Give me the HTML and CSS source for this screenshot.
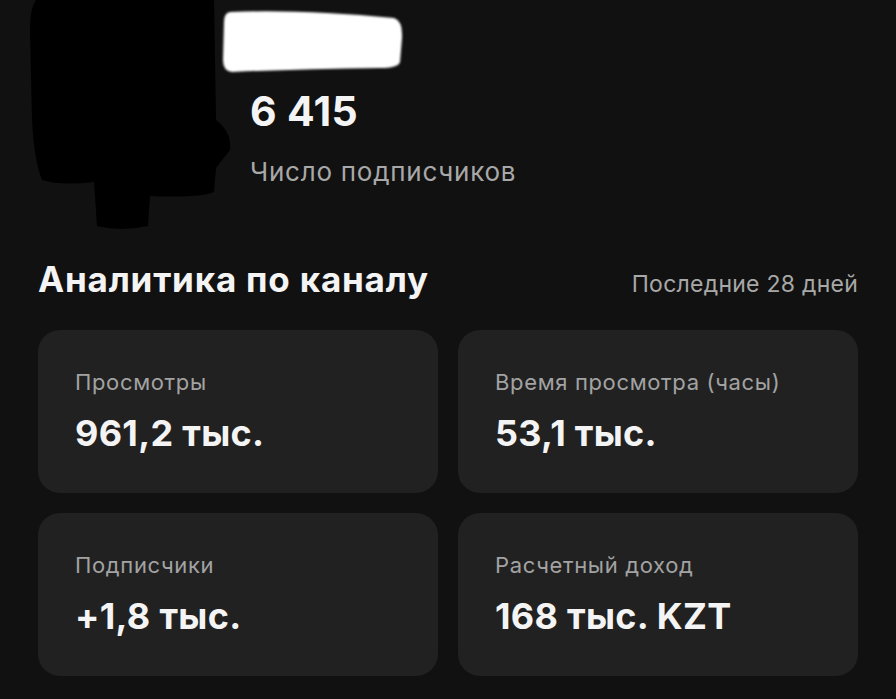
FILE: index.html
```html
<!DOCTYPE html>
<html lang="ru">
<head>
<meta charset="utf-8">
<title>Аналитика по каналу</title>
<link rel="stylesheet" href="styles.css">
</head>
<body>
<main class="screen">
  <header class="profile">
    <svg class="avatar" viewBox="28 0 194 230" width="194" height="230" aria-hidden="true">
      <path d="M36,0 L214,0 L216,120 Q232,132 230,150 L216,168 L214,192 Q200,198 150,196 L148,226 Q120,232 97,226 L94,182 Q60,186 42,180 Q34,160 32,120 L30,30 Q30,8 36,0 Z" fill="#000"/>
    </svg>
    <div class="profile-info">
      <svg class="name-mask" viewBox="222 8 182 66" width="182" height="66" aria-hidden="true">
        <defs>
          <filter id="soft" x="-10%" y="-20%" width="120%" height="140%">
            <feGaussianBlur stdDeviation="1.2"/>
          </filter>
        </defs>
        <path d="M230,12 Q300,9 394,18 Q403,21 402,38 L400,62 Q398,68 380,68 Q300,69 232,72 Q223,71 223,60 L224,22 Q224,13 230,12 Z" fill="#fff" filter="url(#soft)"/>
      </svg>
      <div class="subs-count">6 415</div>
      <div class="subs-label">Число подписчиков</div>
    </div>
  </header>

  <section class="analytics">
    <div class="analytics-head">
      <h1 class="analytics-title">Аналитика по каналу</h1>
      <span class="analytics-period">Последние 28 дней</span>
    </div>
    <div class="stats">
      <div class="stat-card">
        <div class="stat-label">Просмотры</div>
        <div class="stat-value">961,2 тыс.</div>
      </div>
      <div class="stat-card">
        <div class="stat-label">Время просмотра (часы)</div>
        <div class="stat-value">53,1 тыс.</div>
      </div>
      <div class="stat-card">
        <div class="stat-label">Подписчики</div>
        <div class="stat-value">+1,8 тыс.</div>
      </div>
      <div class="stat-card">
        <div class="stat-label">Расчетный доход</div>
        <div class="stat-value">168 тыс. KZT</div>
      </div>
    </div>
  </section>
</main>
</body>
</html>
```

FILE: styles.css
```css
* {
  box-sizing: border-box;
}

html, body {
  margin: 0;
  background: #111111;
}

body {
  width: 896px;
  height: 699px;
  overflow: hidden;
  font-family: Inter, "Liberation Sans", Arial, sans-serif;
  color: #f4f4f4;
}

.screen {
  display: flex;
  flex-direction: column;
}

/* profile header: avatar + channel name + subscriber count */
.profile {
  display: flex;
  height: 262px;
  padding-left: 28px;
}

.avatar {
  flex: none;
  overflow: visible;
}

.profile-info {
  display: flex;
  flex-direction: column;
  padding-top: 8px;
}

.name-mask {
  display: block;
  overflow: visible;
}

.subs-count {
  margin: 17px 0 0 28px;
  font-size: 41px;
  font-weight: 700;
  line-height: 1;
  letter-spacing: 0.3px;
}

.subs-label {
  margin: 27px 0 0 28px;
  font-size: 26px;
  line-height: 1;
  color: #a8a8a8;
  letter-spacing: 0.75px;
}

/* analytics block */
.analytics {
  padding: 0 38px;
}

.analytics-head {
  display: flex;
  justify-content: space-between;
  align-items: baseline;
}

.analytics-title {
  margin: 0;
  font-size: 35px;
  font-weight: 700;
  line-height: 1;
  letter-spacing: 0.8px;
}

.analytics-period {
  font-size: 23px;
  line-height: 1;
  color: #a8a8a8;
  letter-spacing: 0.25px;
}

.stats {
  display: grid;
  grid-template-columns: 1fr 1fr;
  gap: 20px;
  margin-top: 33px;
}

.stat-card {
  height: 163px;
  padding: 41px 37px 0;
  background: #212121;
  border-radius: 22px;
}

.stat-label {
  font-size: 22px;
  line-height: 1;
  color: #a3a3a3;
  letter-spacing: 0.65px;
}

.stat-value {
  margin-top: 22px;
  font-size: 36px;
  font-weight: 700;
  line-height: 1;
  letter-spacing: 0.3px;
}
```
